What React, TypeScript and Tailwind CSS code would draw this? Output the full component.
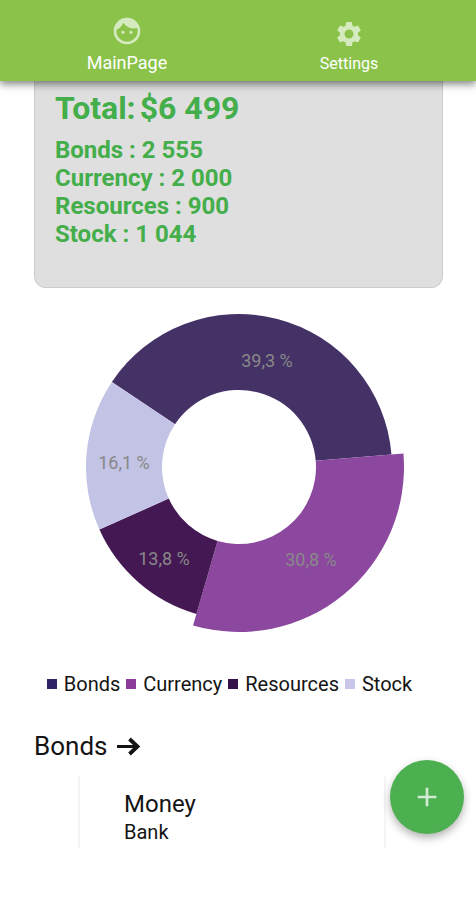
import { MdAdd, MdFace, MdSettings } from "react-icons/md";

type Slice = {
  name: string;
  value: string;
  percent: number;
  color: string;
  swatch: string;
  label: { x: number; y: number };
  selected?: boolean;
};

const slices: Slice[] = [
  { name: "Bonds", value: "2 555", percent: 39.3, color: "#443266", swatch: "bg-[#2f2266]", label: { x: 193, y: 60 } },
  { name: "Currency", value: "2 000", percent: 30.8, color: "#8c489f", swatch: "bg-[#8c3a9c]", label: { x: 237, y: 259 }, selected: true },
  { name: "Resources", value: "900", percent: 13.8, color: "#431853", swatch: "bg-[#361048]", label: { x: 90, y: 258 } },
  { name: "Stock", value: "1 044", percent: 16.1, color: "#c3c3e5", swatch: "bg-[#c8c6ea]", label: { x: 50, y: 162 } },
];

const CENTER = 165;
const INNER = 77;
const OUTER = 153;
const START_ANGLE = -146.2;

function point(radius: number, angle: number) {
  const rad = (angle * Math.PI) / 180;
  return `${CENTER + radius * Math.cos(rad)} ${CENTER + radius * Math.sin(rad)}`;
}

function slicePath(from: number, to: number, outer: number) {
  return [
    `M ${point(outer, from)}`,
    `A ${outer} ${outer} 0 0 1 ${point(outer, to)}`,
    `L ${point(INNER, to)}`,
    `A ${INNER} ${INNER} 0 0 0 ${point(INNER, from)}`,
    "Z",
  ].join(" ");
}

function Header() {
  return (
    <header className="sticky top-0 z-20 bg-[#8bc34a] shadow-[0_3px_8px_rgba(0,0,0,0.5)]">
      <nav className="flex h-[81px] items-end px-4 pb-1.5 text-white">
        <a href="#main" className="flex flex-1 flex-col items-center">
          <MdFace size={32} className="text-white/65" />
          <span className="mt-1 text-lg leading-6">MainPage</span>
        </a>
        <a href="#settings" className="flex flex-1 flex-col items-center">
          <MdSettings size={30} className="text-white/65" />
          <span className="mt-1 text-base leading-[22px]">Settings</span>
        </a>
      </nav>
    </header>
  );
}

function Summary() {
  return (
    <section className="rounded-b-xl border border-t-0 border-[#cccccc] bg-[#dfdfdf] px-5 pt-[9px] pb-[39px] font-bold text-[#43ae4a]">
      <h1 className="flex gap-1 text-[32px] leading-9">
        <span>Total:</span>
        <span>$6 499</span>
      </h1>
      <ul className="mt-2.5 text-2xl leading-7">
        {slices.map((slice) => (
          <li key={slice.name}>
            {slice.name} : {slice.value}
          </li>
        ))}
      </ul>
    </section>
  );
}

function Donut() {
  let angle = START_ANGLE;

  return (
    <svg viewBox="0 0 330 330" className="mx-auto mt-3.5 block w-[330px]" role="img">
      {slices.map((slice) => {
        const from = angle;
        angle += slice.percent * 3.6;
        return (
          <g key={slice.name}>
            <path d={slicePath(from, angle, slice.selected ? 165 : OUTER)} fill={slice.color} />
            <text x={slice.label.x} y={slice.label.y} dy={5} textAnchor="middle" className="fill-[#888888] text-lg">
              {slice.percent.toFixed(1).replace(".", ",")} %
            </text>
          </g>
        );
      })}
    </svg>
  );
}

function Legend() {
  return (
    <ul className="mt-10 flex justify-center gap-1.5 pr-[18px] text-xl leading-6">
      {slices.map((slice) => (
        <li key={slice.name} className="flex items-center gap-[7px]">
          <span className={`size-2.5 ${slice.swatch}`} />
          {slice.name}
        </li>
      ))}
    </ul>
  );
}

function Bonds() {
  return (
    <section className="mt-8">
      <h2>
        <a href="#bonds" className="flex items-center gap-2.5 text-[26px] leading-9">
          Bonds
          <svg viewBox="0 0 24 20" className="h-5 w-6" fill="none" stroke="currentColor">
            <path d="M0 10.5H20" strokeWidth="3" />
            <path d="M12.5 3L20.5 10.5L12.5 18" strokeWidth="3.8" />
          </svg>
        </a>
      </h2>
      <div className="mt-3 mr-[57px] ml-11 border-x-2 border-[#f5f5f5] px-11 pt-3 pb-1">
        <h3 className="text-2xl leading-8">Money</h3>
        <p className="text-xl leading-6">Bank</p>
      </div>
    </section>
  );
}

export default function App() {
  return (
    <div className="min-h-screen bg-white font-[Roboto,sans-serif] text-[#141414]">
      <Header />
      <main className="pr-[33px] pl-[34px]">
        <Summary />
        <Donut />
        <Legend />
        <Bonds />
      </main>
      <button
        type="button"
        aria-label="Add"
        className="fixed right-3 bottom-[66px] z-10 flex size-[74px] items-center justify-center rounded-full bg-[#4caf50] text-white/75 shadow-[0_4px_8px_rgba(0,0,0,0.3)]"
      >
        <MdAdd size={32} />
      </button>
    </div>
  );
}
